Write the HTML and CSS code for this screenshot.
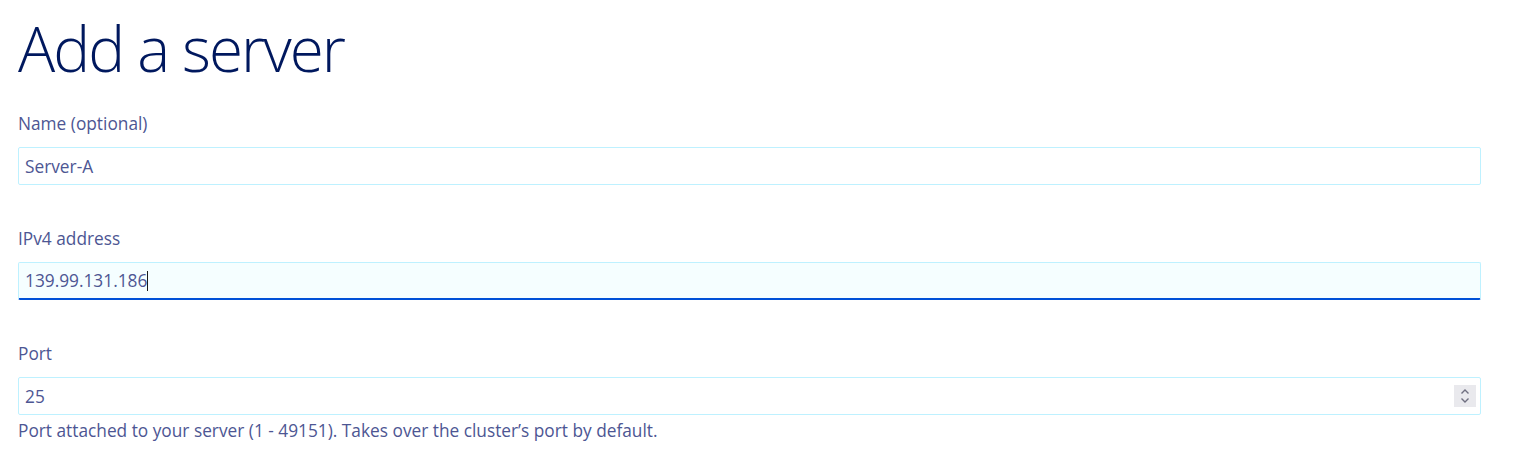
FILE: index.html
```html
<!DOCTYPE html>
<html lang="en">
<head>
<meta charset="utf-8">
<title>Add a server</title>
<link rel="stylesheet" href="styles.css">
</head>
<body>
<main class="page">
  <h1 class="title">Add a server</h1>
  <div class="group">
    <label class="label">Name (optional)</label>
    <div class="field"><span class="value">Server-A</span></div>
  </div>
  <div class="group">
    <label class="label">IPv4 address</label>
    <div class="field is-focused"><span class="value">139.99.131.186</span><span class="caret"></span></div>
  </div>
  <div class="group">
    <label class="label">Port</label>
    <div class="field has-spinner"><span class="value">25</span>
      <span class="spinner">
        <svg width="12" height="18" viewBox="0 0 12 18"><path d="M2.5 6.5 L6 3 L9.5 6.5" fill="none" stroke="#6f6f80" stroke-width="1.4"/><path d="M2.5 11.5 L6 15 L9.5 11.5" fill="none" stroke="#6f6f80" stroke-width="1.4"/></svg>
      </span>
    </div>
    <p class="help">Port attached to your server (1 - 49151). Takes over the cluster’s port by default.</p>
  </div>
</main>
</body>
</html>
```
FILE: styles.css
```css
* { box-sizing: border-box; }
html, body { margin: 0; padding: 0; background: #fff; }
body { font-family: "Source Sans Pro", "Open Sans", "Liberation Sans", sans-serif; color: #4d5693; }
.page { padding: 9px 32px 0 18px; display: flex; flex-direction: column; }
.title {
  margin: 0 0 24px 0;
  font-size: 62px;
  font-weight: 300;
  letter-spacing: -2px;
  line-height: 79px;
  color: #00185e;
}
.group { display: flex; flex-direction: column; margin-bottom: 42px; }
.label { font-size: 17.3px; line-height: 24px; margin-bottom: 11px; color: #4d5693; }
.field {
  position: relative;
  height: 38px;
  border: 1px solid #bef1ff;
  border-radius: 2px;
  padding: 0 6px;
  display: flex;
  align-items: center;
  font-size: 17.3px;
  color: #4d5693;
  background: #fff;
}
.field.is-focused { background: #f5feff; border-bottom: 2px solid #0050d7; }
.caret { display: inline-block; width: 1px; height: 20px; background: #1b1b1b; }
.spinner {
  position: absolute;
  right: 4px;
  top: 7px;
  width: 22px;
  height: 22px;
  background: #e9e9ed;
  display: flex;
  align-items: center;
  justify-content: center;
}
.help { margin: 4px 0 0 0; font-size: 17.3px; line-height: 24px; color: #4d5693; }
```
